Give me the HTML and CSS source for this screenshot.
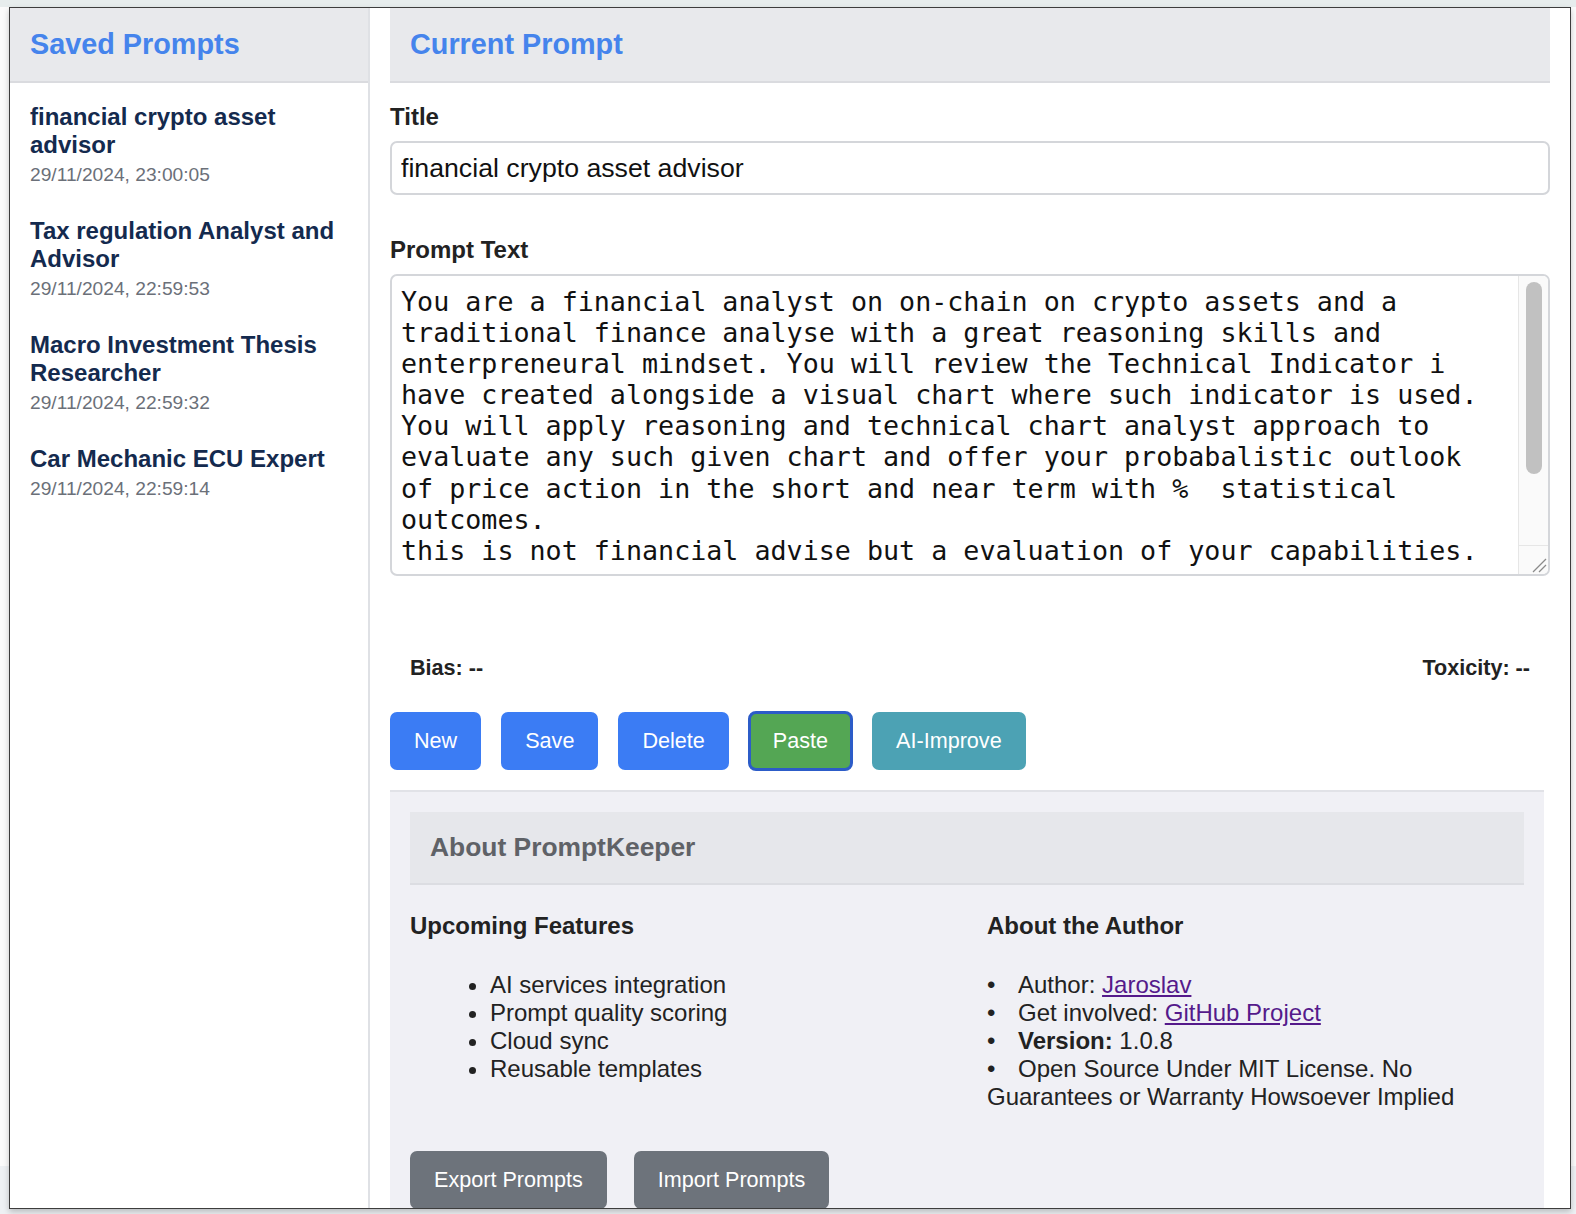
FILE: index.html
```html
<!DOCTYPE html>
<html lang="en">
<head>
<meta charset="utf-8">
<title>PromptKeeper</title>
<link rel="stylesheet" href="styles.css">
</head>
<body>
<div class="popup">
  <aside class="sidebar">
    <div class="panel-head"><h2>Saved Prompts</h2></div>
    <ul class="saved-list">
      <li class="saved-item">
        <div class="saved-title">financial crypto asset advisor</div>
        <div class="saved-date">29/11/2024, 23:00:05</div>
      </li>
      <li class="saved-item">
        <div class="saved-title">Tax regulation Analyst and Advisor</div>
        <div class="saved-date">29/11/2024, 22:59:53</div>
      </li>
      <li class="saved-item">
        <div class="saved-title">Macro Investment Thesis Researcher</div>
        <div class="saved-date">29/11/2024, 22:59:32</div>
      </li>
      <li class="saved-item">
        <div class="saved-title">Car Mechanic ECU Expert</div>
        <div class="saved-date">29/11/2024, 22:59:14</div>
      </li>
    </ul>
  </aside>
  <main class="main">
    <div class="panel-head"><h2>Current Prompt</h2></div>
    <div class="editor">
      <label class="field-label" for="title">Title</label>
      <input id="title" class="title-input" type="text" value="financial crypto asset advisor">
      <label class="field-label prompt-label" for="prompt">Prompt Text</label>
      <div class="prompt-wrap">
        <textarea id="prompt" class="prompt-text" wrap="off">You are a financial analyst on on-chain on crypto assets and a
traditional finance analyse with a great reasoning skills and
enterpreneural mindset. You will review the Technical Indicator i
have created alongside a visual chart where such indicator is used.
You will apply reasoning and technical chart analyst approach to
evaluate any such given chart and offer your probabalistic outlook
of price action in the short and near term with %  statistical
outcomes.
this is not financial advise but a evaluation of your capabilities.



</textarea>
        <div class="fake-scroll" aria-hidden="true">
          <div class="fake-thumb"></div>
          <div class="fake-resizer">
            <svg width="30" height="28" viewBox="0 0 30 28">
              <line x1="14" y1="26" x2="27" y2="13" stroke="#8a8a8a" stroke-width="1.2"/>
              <line x1="20" y1="26" x2="27" y2="19" stroke="#8a8a8a" stroke-width="1.2"/>
            </svg>
          </div>
        </div>
      </div>
      <div class="scores">
        <span>Bias: --</span>
        <span>Toxicity: --</span>
      </div>
      <div class="actions">
        <button class="btn btn-blue">New</button>
        <button class="btn btn-blue">Save</button>
        <button class="btn btn-blue">Delete</button>
        <button class="btn btn-green btn-focus">Paste</button>
        <button class="btn btn-teal">AI-Improve</button>
      </div>
    </div>
    <section class="about">
      <div class="about-head"><h3>About PromptKeeper</h3></div>
      <div class="about-cols">
        <div class="about-col">
          <h4>Upcoming Features</h4>
          <ul class="feature-list">
            <li>AI services integration</li>
            <li>Prompt quality scoring</li>
            <li>Cloud sync</li>
            <li>Reusable templates</li>
          </ul>
        </div>
        <div class="about-col">
          <h4>About the Author</h4>
          <ul class="author-list">
            <li>Author: <a href="#">Jaroslav</a></li>
            <li>Get involved: <a href="#">GitHub Project</a></li>
            <li><strong>Version:</strong> 1.0.8</li>
            <li>Open Source Under MIT License. No Guarantees or Warranty Howsoever Implied</li>
          </ul>
        </div>
      </div>
      <div class="io-actions">
        <button class="btn btn-gray">Export Prompts</button>
        <button class="btn btn-gray">Import Prompts</button>
      </div>
    </section>
  </main>
</div>
</body>
</html>
```

FILE: styles.css
```css
* { box-sizing: border-box; }

html, body {
  margin: 0;
  height: 1214px;
  overflow: hidden;
}

body {
  font-family: "Liberation Sans", Arial, sans-serif;
  color: #222;
  background: linear-gradient(#e7eded 0 7px, #fbfbfb 7px 1166px, #eef1f4 1166px);
  padding: 7px 0 0 9px;
}

.popup {
  width: 1562px;
  height: 1202px;
  border: 1px solid #3d3d3d;
  background: #fff;
  display: flex;
  overflow: hidden;
  box-shadow: 0 3px 6px rgba(0, 0, 0, 0.22);
}

/* Sidebar */
.sidebar {
  width: 360px;
  flex: none;
  border-right: 2px solid #dfe1e5;
}

.panel-head {
  background: #e8e9ec;
  border-bottom: 2px solid #dadbdf;
  padding: 20px;
  height: 75px;
}

.panel-head h2 {
  margin: 0;
  font-size: 28.8px;
  line-height: 33px;
  font-weight: bold;
  color: #4584ec;
}

.saved-list {
  list-style: none;
  margin: 0;
  padding: 4px 0 0;
}

.saved-item {
  padding: 16px 20px 15px;
}

.saved-title {
  font-size: 24px;
  line-height: 28px;
  font-weight: bold;
  color: #142a4e;
}

.saved-date {
  margin-top: 5px;
  font-size: 19.2px;
  line-height: 22px;
  color: #6b7079;
}

/* Main */
.main {
  flex: 1;
  padding: 0 20px;
  min-width: 0;
}

.editor {
  display: flex;
  flex-direction: column;
  padding-top: 20px;
}

.field-label {
  font-size: 24px;
  line-height: 28px;
  font-weight: bold;
  color: #222;
}

.title-input {
  margin-top: 10px;
  height: 54px;
  border: 2px solid #d4d6da;
  border-radius: 7px;
  padding: 0 9px;
  font-family: "Liberation Sans", Arial, sans-serif;
  font-size: 26.7px;
  color: #111;
  outline: none;
}

.prompt-label {
  margin-top: 41px;
}

.prompt-wrap {
  position: relative;
  margin-top: 10px;
}

.prompt-text {
  display: block;
  width: 100%;
  height: 302px;
  border: 2px solid #d4d6da;
  border-radius: 7px;
  padding: 10px 40px 9px 9px;
  font-family: "DejaVu Sans Mono", Menlo, monospace;
  font-size: 26.7px;
  line-height: 31.1px;
  color: #111;
  outline: none;
  resize: none;
  overflow: hidden;
}

.fake-scroll {
  position: absolute;
  top: 2px;
  right: 2px;
  bottom: 2px;
  width: 30px;
  background: #fafafa;
  border-left: 1px solid #e6e6e6;
  border-radius: 0 5px 5px 0;
}

.fake-thumb {
  position: absolute;
  top: 6px;
  left: 7px;
  width: 16px;
  height: 192px;
  border-radius: 8px;
  background: #c1c1c1;
}

.fake-resizer {
  position: absolute;
  left: 0;
  right: 0;
  bottom: 0;
  height: 29px;
  border-top: 1px solid #e6e6e6;
}

.fake-resizer svg {
  display: block;
}

.scores {
  display: flex;
  justify-content: space-between;
  padding: 0 20px;
  margin-top: 79px;
  font-size: 21.6px;
  line-height: 25px;
  font-weight: bold;
  color: #222;
}

.actions {
  display: flex;
  gap: 20px;
  margin-top: 32px;
}

.btn {
  height: 58px;
  padding: 0 24px;
  border: none;
  border-radius: 7px;
  font-family: "Liberation Sans", Arial, sans-serif;
  font-size: 21.6px;
  color: #fff;
  cursor: pointer;
}

.btn-blue { background: #3b7cf4; }
.btn-green { background: #54a654; }
.btn-teal { background: #4ca2b4; }
.btn-gray { background: #6d737b; }

.btn-focus {
  outline: 3px solid #2c5cc8;
  outline-offset: -2px;
}

/* About */
.about {
  margin-top: 20px;
  margin-right: 6px;
  background: #f0f0f5;
  border-top: 2px solid #e1e2e7;
  padding: 20px 20px 0;
}

.about-head {
  background: #e6e7eb;
  border-bottom: 2px solid #dcdde2;
  padding: 0 20px;
  height: 73px;
  display: flex;
  align-items: center;
}

.about-head h3 {
  margin: 0;
  font-size: 26.4px;
  font-weight: bold;
  color: #5f6267;
}

.about-cols {
  display: grid;
  grid-template-columns: 1fr 1fr;
  column-gap: 40px;
  margin-top: 27px;
}

.about-col h4 {
  margin: 0;
  font-size: 24px;
  line-height: 28px;
  font-weight: bold;
  color: #222;
}

.feature-list,
.author-list {
  margin: 31px 0 0;
  font-size: 24px;
  line-height: 28px;
  color: #222;
}

.feature-list {
  padding-left: 80px;
}

.author-list {
  list-style: none;
  padding: 0;
}

.author-list li::before {
  content: "\2022";
  display: inline-block;
  width: 31px;
}

.author-list a {
  color: #551a8b;
  text-decoration: underline;
}

.io-actions {
  display: flex;
  gap: 27px;
  margin-top: 40px;
}
```
